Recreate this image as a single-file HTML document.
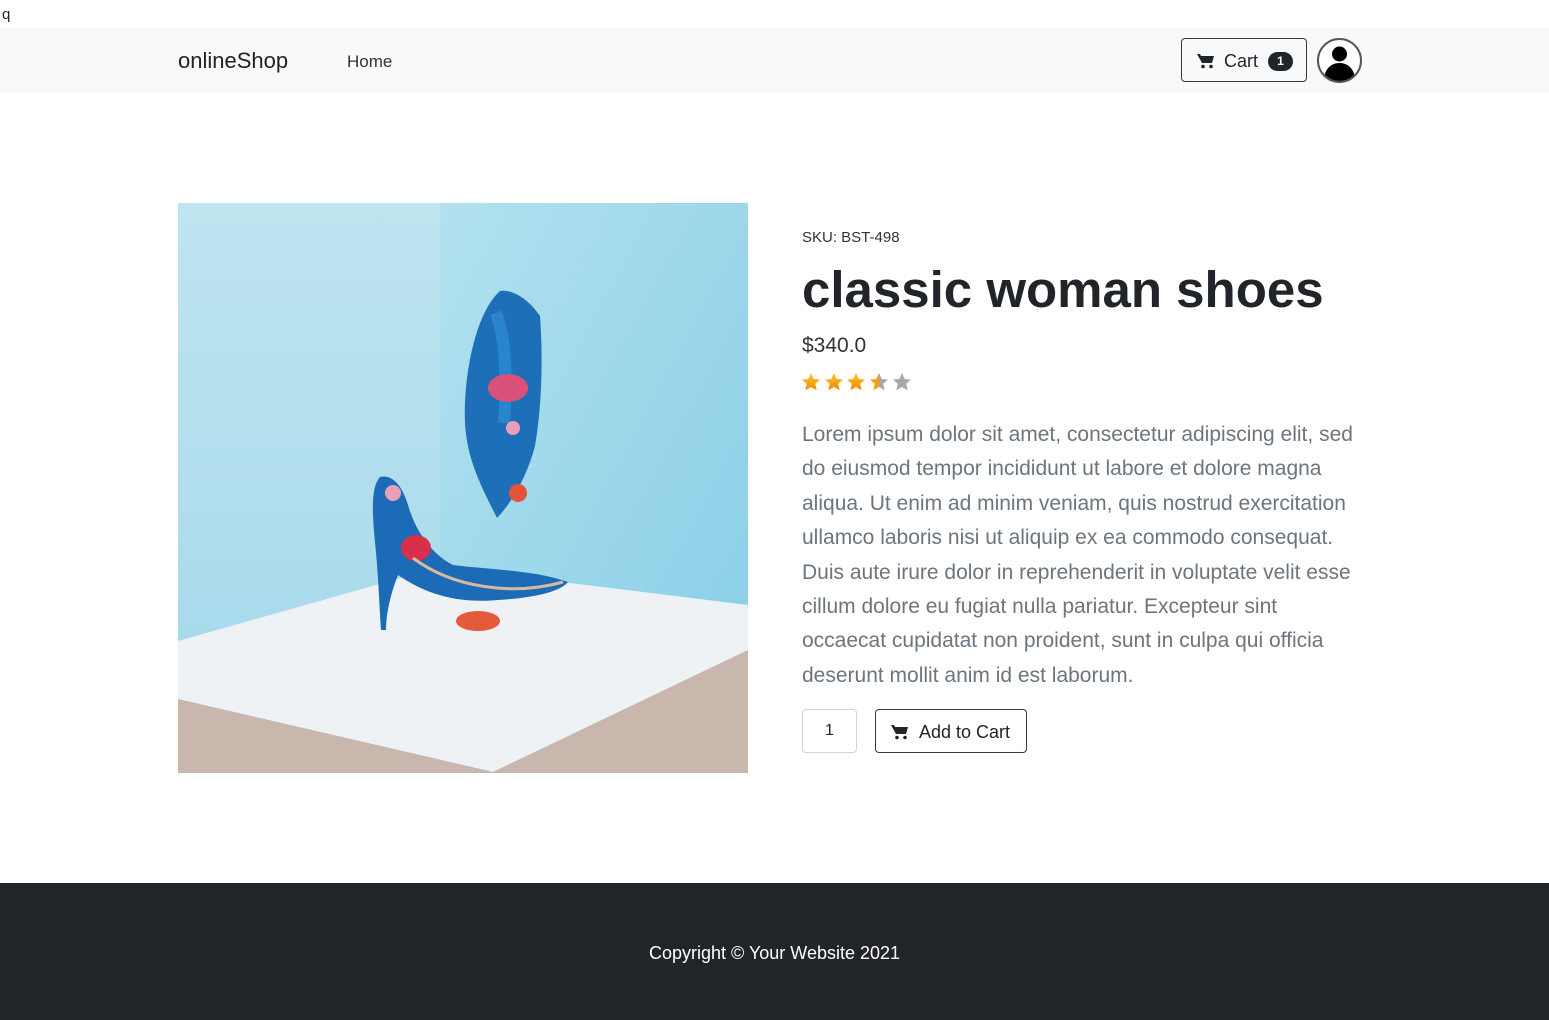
<!DOCTYPE html>
<html><head><meta charset="utf-8"><style>
*{box-sizing:border-box;margin:0;padding:0}
body{width:1549px;height:1020px;background:#fff;font-family:"Liberation Sans",sans-serif;color:#212529;position:relative;overflow:hidden}
.q{position:absolute;left:2px;top:6px;font-size:15px}
nav{position:absolute;top:28px;left:0;width:1549px;height:65px;background:#f8f9fa}
.brand{position:absolute;left:178px;top:20px;font-size:22px;color:#222}
.home{position:absolute;left:347px;top:24px;font-size:17px;color:#333}
.cart{position:absolute;left:1181px;top:10px;width:126px;height:44px;border:1px solid #343a40;border-radius:4px;font-size:18px}
.cart span.t{position:absolute;left:42px;top:12px}
.badge{position:absolute;left:86px;top:13px;width:25px;height:19px;border-radius:10px;background:#212529;color:#fff;font-size:12px;font-weight:bold;text-align:center;line-height:19px}
.av{position:absolute;left:1317px;top:10px;width:45px;height:45px;border-radius:50%;border:2px solid #555;background:#fff;overflow:hidden}
.img{position:absolute;left:178px;top:203px;width:570px;height:570px}
.sku{position:absolute;left:802px;top:229px;font-size:15px;color:#333}
h1{position:absolute;left:802px;top:260px;font-size:51px;font-weight:bold;color:#212529}
.price{position:absolute;left:802px;top:334px;font-size:21px;color:#333}
.stars{position:absolute;left:801px;top:372px}
.desc{position:absolute;left:802px;top:418px;width:556px;font-size:21px;line-height:34.4px;color:#6c757d;font-weight:300}
.qty{position:absolute;left:802px;top:709px;width:55px;height:44px;border:1px solid #ced4da;border-radius:4px;text-align:center;line-height:42px;font-size:16px}
.add{position:absolute;left:875px;top:709px;width:152px;height:44px;border:1px solid #343a40;border-radius:4px;font-size:18px}
.add span{position:absolute;left:43px;top:12px}
footer{position:absolute;left:0;top:883px;width:1549px;height:137px;background:#212529;color:#fff;text-align:center;font-size:18px;padding-top:60px}
</style></head><body>
<div class="q">q</div>
<nav>
<div class="brand">onlineShop</div>
<div class="home">Home</div>
<div class="cart"><svg style="position:absolute;left:15px;top:14px" width="18" height="16" viewBox="0 0 18 16"><path d="M0 1h3l1 2h13l-2 7H5z" fill="#212529"/><circle cx="6" cy="13.5" r="1.8" fill="#212529"/><circle cx="14" cy="13.5" r="1.8" fill="#212529"/></svg><span class="t">Cart</span><div class="badge">1</div></div>
<div class="av"><svg width="41" height="41" viewBox="0 0 41 41"><circle cx="20.5" cy="14" r="7.5" fill="#000"/><path d="M5 41c0-12 7-18 15.5-18S36 29 36 41z" fill="#000"/></svg></div>
</nav>
<svg class="img" viewBox="0 0 570 570">
<defs><linearGradient id="lw" x1="0" y1="0" x2="0" y2="1"><stop offset="0" stop-color="#bfe5f0"/><stop offset="1" stop-color="#a2d7ea"/></linearGradient>
<linearGradient id="rw" x1="0" y1="0" x2="1" y2="1"><stop offset="0" stop-color="#b2e1ef"/><stop offset="1" stop-color="#86cde6"/></linearGradient></defs>
<rect width="262" height="570" fill="url(#lw)"/>
<rect x="262" width="308" height="570" fill="url(#rw)"/>
<polygon points="0,438 262,364 570,402 570,447 315,569 0,496" fill="#eef2f5"/>
<polygon points="0,496 315,569 570,447 570,570 0,570" fill="#c9b7ae"/>
<path d="M322 88c14-2 30 10 40 25 3 40 2 90-5 130-8 30-22 55-38 72-12-25-30-55-32-95-2-45 10-110 35-132z" fill="#1d6fb8"/>
<path d="M318 110c8 20 12 60 8 110" stroke="#2a86cc" stroke-width="12" fill="none"/>
<ellipse cx="330" cy="185" rx="20" ry="14" fill="#d9507a"/>
<circle cx="335" cy="225" r="7" fill="#e6a0b8"/>
<circle cx="340" cy="290" r="9" fill="#e2553a"/>
<path d="M202 274c12-3 22 8 28 28 8 28 25 50 45 60 40 5 80 5 115 17-8 10-35 16-70 18-45 4-75-8-100-25-8 20-12 40-12 55l-5 0c-2-30-3-60-6-88-3-30-4-55 5-65z" fill="#1b6bb7"/>
<ellipse cx="238" cy="345" rx="15" ry="13" fill="#d8304a"/>
<ellipse cx="300" cy="418" rx="22" ry="10" fill="#e45a3a"/>
<circle cx="215" cy="290" r="8" fill="#e6a0b8"/>
<path d="M235 355c40 30 100 38 150 24" stroke="#d8b8a0" stroke-width="3" fill="none"/>
</svg>
<div class="sku">SKU: BST-498</div>
<h1>classic woman shoes</h1>
<div class="price">$340.0</div>
<svg class="stars" width="115" height="22" viewBox="0 0 115 22">
<defs><linearGradient id="g" x1="0" y1="0" x2="0" y2="1"><stop offset="0" stop-color="#ffc531"/><stop offset="1" stop-color="#f08a00"/></linearGradient>
<linearGradient id="h" x1="0" y1="0" x2="1" y2="0"><stop offset=".5" stop-color="#f5a00a"/><stop offset=".5" stop-color="#a8a8a8"/></linearGradient>
<path id="s" d="M10 1l2.7 6 6.3.6-4.8 4.2 1.5 6.4L10 15l-5.7 3.2 1.5-6.4L1 7.6l6.3-.6z"/></defs>
<use href="#s" fill="url(#g)"/><use href="#s" x="23" fill="url(#g)"/><use href="#s" x="45" fill="url(#g)"/><use href="#s" x="68" fill="url(#h)"/><use href="#s" x="91" fill="#a8a8a8"/>
</svg>
<div class="desc">Lorem ipsum dolor sit amet, consectetur adipiscing elit, sed do eiusmod tempor incididunt ut labore et dolore magna aliqua. Ut enim ad minim veniam, quis nostrud exercitation ullamco laboris nisi ut aliquip ex ea commodo consequat. Duis aute irure dolor in reprehenderit in voluptate velit esse cillum dolore eu fugiat nulla pariatur. Excepteur sint occaecat cupidatat non proident, sunt in culpa qui officia deserunt mollit anim id est laborum.</div>
<div class="qty">1</div>
<div class="add"><svg style="position:absolute;left:15px;top:14px" width="18" height="16" viewBox="0 0 18 16"><path d="M0 1h3l1 2h13l-2 7H5z" fill="#212529"/><circle cx="6" cy="13.5" r="1.8" fill="#212529"/><circle cx="14" cy="13.5" r="1.8" fill="#212529"/></svg><span>Add to Cart</span></div>
<footer>Copyright © Your Website 2021</footer>
</body></html>
